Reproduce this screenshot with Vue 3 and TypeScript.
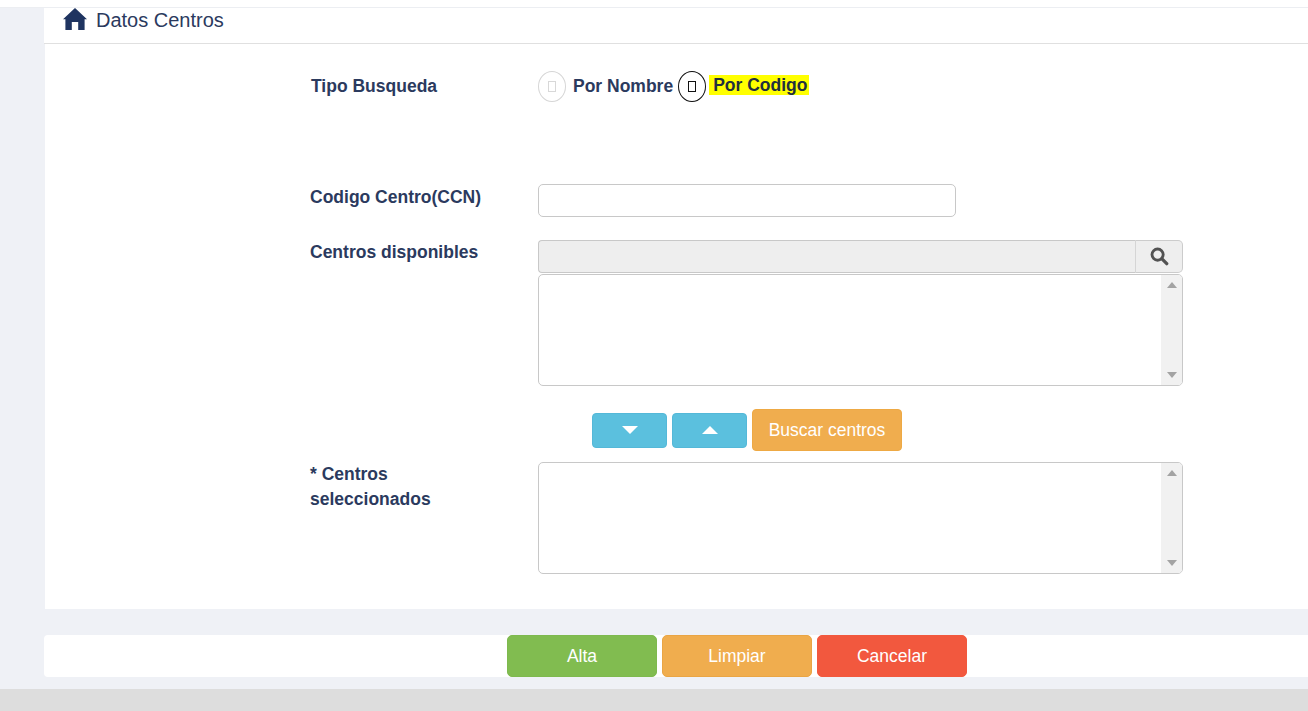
<script setup lang="ts">
const actions = [
  { label: 'Alta', tone: 'green' },
  { label: 'Limpiar', tone: 'orange' },
  { label: 'Cancelar', tone: 'red' },
]
</script>

<template>
  <div class="page">
    <div class="topstrip"></div>
    <div class="body">
      <section class="panel">
        <header class="head">
          <svg class="home" viewBox="0 0 24 22" aria-hidden="true">
            <path d="M12 0 0 11.3h2.4V22h6.4v-8h6.4v8h6.4V11.3H24z" fill="#1f3460" />
          </svg>
          <span>Datos Centros</span>
        </header>
        <div class="form">
          <div class="row r-type">
            <label class="lab lab-type">Tipo Busqueda</label>
            <div class="radios">
              <span class="radio"><i></i></span>
              <span class="opt">Por Nombre</span>
              <span class="radio on"><i></i></span>
              <span class="opt mark">Por Codigo</span>
            </div>
          </div>
          <div class="row r-code">
            <label class="lab">Codigo Centro(CCN)</label>
            <input class="text" type="text" />
          </div>
          <div class="row r-avail">
            <label class="lab">Centros disponibles</label>
            <div class="field">
              <div class="search">
                <div class="search-in"></div>
                <button class="search-btn" type="button">
                  <svg viewBox="0 0 20 20" width="19" height="19" aria-hidden="true">
                    <circle cx="8" cy="8" r="5.9" fill="none" stroke="#525252" stroke-width="3" />
                    <path d="m12.6 12.6 5 5" stroke="#525252" stroke-width="3.4" stroke-linecap="round" />
                  </svg>
                </button>
              </div>
              <div class="list">
                <div class="scroll"><b class="up"></b><b class="down"></b></div>
              </div>
            </div>
          </div>
          <div class="row r-btns">
            <span></span>
            <div class="movers">
              <button class="mv" type="button"><b class="tri-d"></b></button>
              <button class="mv" type="button"><b class="tri-u"></b></button>
              <button class="find" type="button">Buscar centros</button>
            </div>
          </div>
          <div class="row r-sel">
            <label class="lab lab-sel">* Centros seleccionados</label>
            <div class="list">
              <div class="scroll"><b class="up"></b><b class="down"></b></div>
            </div>
          </div>
        </div>
      </section>
      <footer class="foot">
        <button v-for="a in actions" :key="a.label" class="act" :class="a.tone" type="button">{{ a.label }}</button>
      </footer>
    </div>
    <div class="bottom"></div>
  </div>
</template>

<style scoped>
.page {
  width: 1308px;
  height: 711px;
  overflow: hidden;
  display: flex;
  flex-direction: column;
  background: #eff1f6;
  font-family: "Liberation Sans", Arial, sans-serif;
  color: #2b3a5e;
}
.topstrip { background: #fff; border-bottom: 1px solid #eceef2; height: 7px; }
.body { flex: 1; padding-left: 44px; display: flex; flex-direction: column; }
.panel { height: 601px; display: flex; flex-direction: column; }
.head {
  height: 36px;
  box-sizing: border-box;
  background: #fff;
  border-bottom: 1px solid #e0e0e0;
  padding-left: 19px;
  display: flex;
  align-items: flex-start;
  font-size: 20px;
  line-height: 24px;
  gap: 9px;
}
.home { width: 24px; height: 22px; }
.form { flex: 1; margin-left: 1px; padding-left: 265px; background: #fff; }
.row { display: grid; grid-template-columns: 228px 645px; }
.lab { font-size: 17.5px; font-weight: 700; line-height: 25px; color: #2b3a5e; }
.r-type { padding-top: 27px; height: 140px; box-sizing: border-box; }
.lab-type { padding-left: 1px; padding-top: 3px; }
.radios { display: flex; align-items: flex-start; font-size: 17.5px; font-weight: 700; line-height: 20px; }
.radio {
  width: 28px; height: 31px; box-sizing: border-box;
  border: 1px solid #d6d6d6; border-radius: 50%;
  display: flex; align-items: center; justify-content: center;
}
.radio i { width: 6px; height: 9px; border: 1px solid #d8d8d8; display: block; }
.radio.on { border-color: #111; margin-left: 5px; }
.radio.on i { border-color: #111; }
.opt { margin-top: 5px; margin-left: 7px; }
.mark { background: #ffff00; color: #222f3f; padding: 0 2px 0 4px; margin-left: 3px; margin-top: 4px; height: 20px; }
.r-code { height: 56px; }
.r-code .lab { padding-top: 1px; }
.text {
  width: 418px; height: 33px; box-sizing: border-box;
  border: 1px solid #c8c8c8; border-radius: 5px; background: #fff; padding: 0; margin: 0;
}
.r-avail { height: 169px; }
.field { display: flex; flex-direction: column; gap: 1px; }
.search { display: flex; height: 33px; }
.search-in {
  flex: 1; box-sizing: border-box; height: 33px;
  background: #eeeeee; border: 1px solid #c8c8c8; border-radius: 4px 0 0 4px; border-right-color: #d5d5d5;
}
.search-btn {
  width: 48px; height: 33px; margin-left: -1px; padding: 0; box-sizing: border-box;
  background: #eeeeee; border: 1px solid #cccccc; border-left-color: #d5d5d5; border-radius: 0 5px 5px 0;
  display: flex; align-items: center; justify-content: center;
}
.list {
  position: relative; height: 112px; box-sizing: border-box;
  border: 1px solid #c8c8c8; border-radius: 5px; background: #fff; overflow: hidden;
}
.scroll { position: absolute; top: 0; right: 0; bottom: 0; width: 21px; background: #f1f1f1; }
.up, .down { position: absolute; left: 6px; width: 0; height: 0; border-left: 5px solid transparent; border-right: 5px solid transparent; }
.up { top: 7px; border-bottom: 6px solid #a3a3a3; }
.down { bottom: 7px; border-top: 6px solid #a3a3a3; }
.r-btns { height: 53px; }
.movers { display: flex; align-items: center; gap: 5px; padding-left: 54px; height: 42px; }
.mv {
  width: 75px; height: 35px; padding: 0; border: 1px solid #54b8d8; border-radius: 4px; background: #5bc0de;
  display: flex; align-items: center; justify-content: center;
}
.tri-d { width: 0; height: 0; border-left: 8.5px solid transparent; border-right: 8.5px solid transparent; border-top: 8px solid #fff; }
.tri-u { width: 0; height: 0; border-left: 8.5px solid transparent; border-right: 8.5px solid transparent; border-bottom: 8px solid #fff; }
.find {
  width: 150px; height: 42px; padding: 0; border: 1px solid #eea944; border-radius: 4px; background: #f0ad4e;
  color: #fff; font: 17.5px "Liberation Sans", Arial, sans-serif;
}
.r-sel .lab-sel { width: 150px; }
.foot {
  margin-top: 26px; height: 42px; background: #fff; border-radius: 4px 0 0 4px;
  display: flex; gap: 5px; padding-left: 463px;
}
.act {
  width: 150px; height: 42px; padding: 0; border-radius: 5px; color: #fff;
  font: 17.5px "Liberation Sans", Arial, sans-serif; border: 1px solid transparent;
}
.green { background: #81bc50; border-color: #7eb94e; }
.orange { background: #f0ad4e; border-color: #eaa544; }
.red { background: #f2583e; border-color: #f2583e; }
.bottom { height: 22px; background: #dddddd; }
</style>
